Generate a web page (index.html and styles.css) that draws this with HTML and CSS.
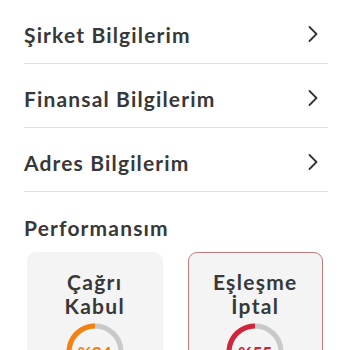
FILE: index.html
```html
<!DOCTYPE html>
<html lang="tr">
<head>
<meta charset="utf-8">
<link rel="stylesheet" href="styles.css">
</head>
<body>
<div class="page">
  <div class="row"><span class="label">Şirket Bilgilerim</span><svg class="chev" width="12" height="18" viewBox="0 0 12 18"><path d="M2.5 2 L9.5 9 L2.5 16" fill="none" stroke="#333" stroke-width="1.8" stroke-linecap="round" stroke-linejoin="round"/></svg></div>
  <div class="row"><span class="label">Finansal Bilgilerim</span><svg class="chev" width="12" height="18" viewBox="0 0 12 18"><path d="M2.5 2 L9.5 9 L2.5 16" fill="none" stroke="#333" stroke-width="1.8" stroke-linecap="round" stroke-linejoin="round"/></svg></div>
  <div class="row"><span class="label">Adres Bilgilerim</span><svg class="chev" width="12" height="18" viewBox="0 0 12 18"><path d="M2.5 2 L9.5 9 L2.5 16" fill="none" stroke="#333" stroke-width="1.8" stroke-linecap="round" stroke-linejoin="round"/></svg></div>
  <h2 class="heading">Performansım</h2>
  <div class="cards">
    <div class="card">
      <div class="card-title">Çağrı<br>Kabul</div>
      <div class="gauge">
        <svg width="58" height="58" viewBox="0 0 58 58">
          <path d="M10.6 47.4 A26 26 0 1 1 47.4 47.4" fill="none" stroke="#c9c9c9" stroke-width="5"/>
          <path d="M10.6 47.4 A26 26 0 0 1 29 3" fill="none" stroke="#f5820f" stroke-width="5"/>
        </svg>
        <span class="gauge-val orange">%94</span>
      </div>
    </div>
    <div class="card card-alert">
      <div class="card-title">Eşleşme<br>İptal</div>
      <div class="gauge">
        <svg width="58" height="58" viewBox="0 0 58 58">
          <path d="M10.6 47.4 A26 26 0 1 1 47.4 47.4" fill="none" stroke="#c9c9c9" stroke-width="5"/>
          <path d="M10.6 47.4 A26 26 0 0 1 29 3" fill="none" stroke="#d0253a" stroke-width="5"/>
        </svg>
        <span class="gauge-val red">%55</span>
      </div>
    </div>
  </div>
</div>
</body>
</html>
```
FILE: styles.css
```css
html, body {
  margin: 0;
  padding: 0;
  background: #ffffff;
}
body {
  font-family: "Lato", "Noto Sans", sans-serif;
  color: #383838;
  width: 350px;
  height: 350px;
  overflow: hidden;
}
.page {
  padding: 0 22px 0 24px;
}
.row {
  box-sizing: border-box;
  height: 64px;
  padding-top: 5px;
  display: flex;
  align-items: center;
  justify-content: space-between;
  border-bottom: 1px solid #e2e2e2;
}
.label {
  font-size: 21px;
  font-weight: 700;
  letter-spacing: 1.15px;
}
.chev {
  margin-right: 9px;
}
.heading {
  margin: 0;
  height: 60px;
  display: flex;
  align-items: center;
  padding-top: 10px;
  box-sizing: border-box;
  font-size: 21px;
  font-weight: 700;
  letter-spacing: 1.15px;
}
.cards {
  display: flex;
  gap: 25px;
  padding: 0 5px 0 3px;
}
.card {
  flex: 1;
  height: 140px;
  box-sizing: border-box;
  background: #f4f4f4;
  border-radius: 9px;
  padding-top: 17px;
  display: flex;
  flex-direction: column;
  align-items: center;
  border: 1px solid #f4f4f4;
}
.card-alert {
  border-color: #c27a80;
}
.card-title {
  font-size: 21px;
  font-weight: 700;
  line-height: 24px;
  text-align: center;
  letter-spacing: 1.3px;
}
.gauge {
  position: relative;
  margin-top: 5px;
  width: 58px;
  height: 58px;
}
.gauge svg {
  display: block;
}
.gauge-val {
  position: absolute;
  left: 0;
  right: 0;
  top: 19px;
  text-align: center;
  font-size: 17px;
  font-weight: 900;
}
.orange { color: #f5820f; }
.red { color: #d0253a; }
```
